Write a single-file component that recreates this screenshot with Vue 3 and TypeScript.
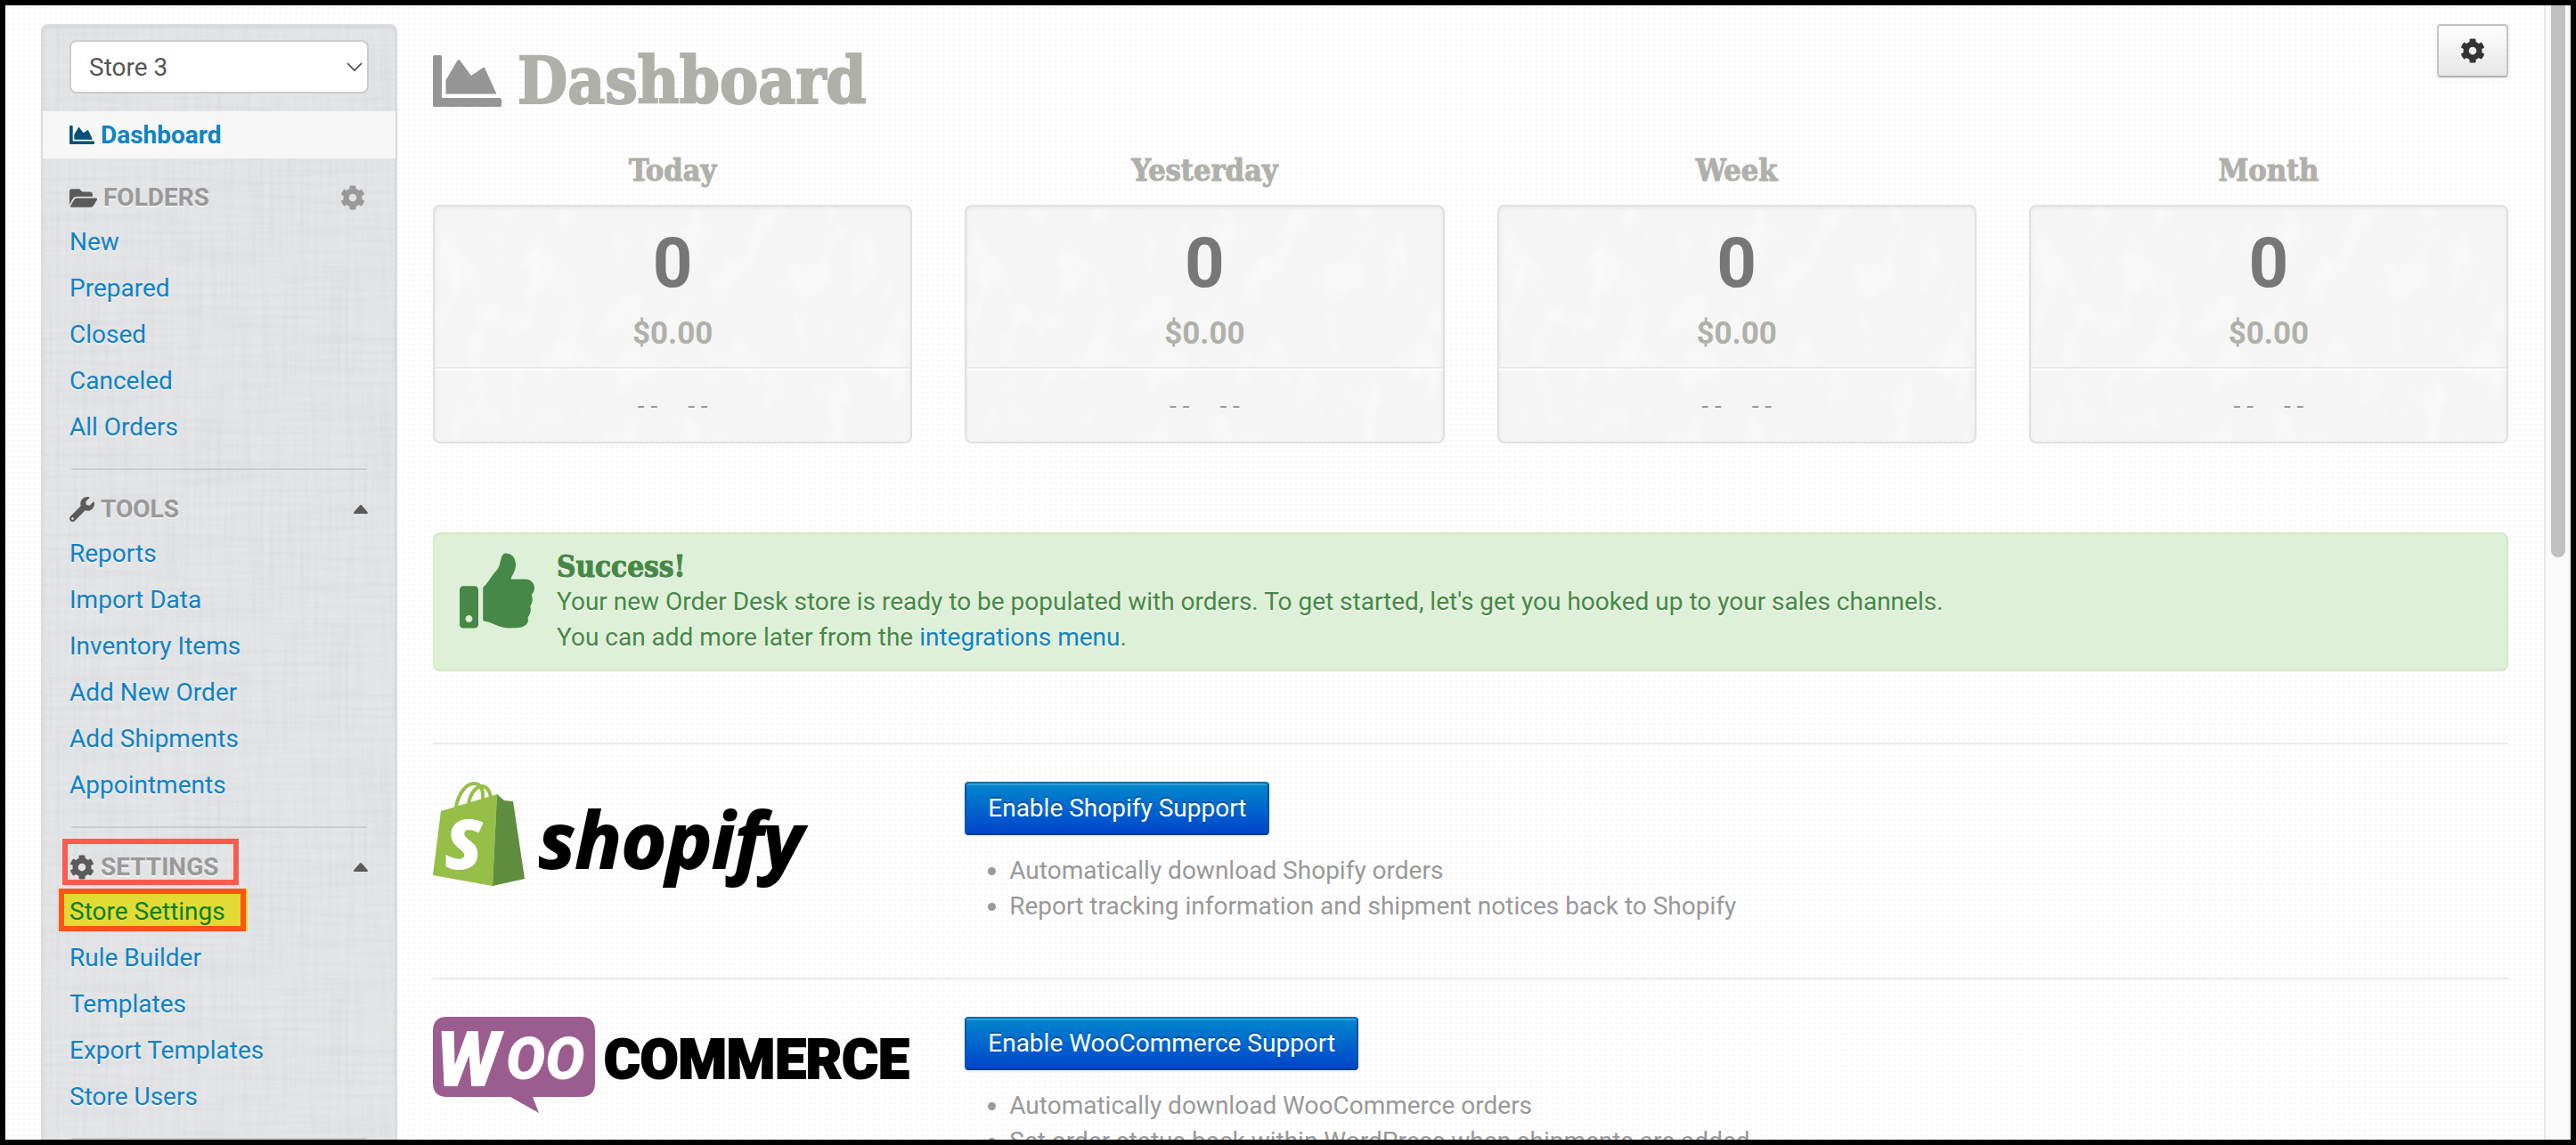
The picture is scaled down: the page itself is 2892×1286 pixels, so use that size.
<script setup lang="ts">
import { ref } from 'vue'

interface NavSection {
  title: string
  icon: 'folder' | 'wrench' | 'cog'
  control: 'cog' | 'caret'
  marked?: boolean
  items: string[]
}

interface Period {
  label: string
  orders: number
  total: string
}

interface Channel {
  id: 'shopify' | 'woo'
  button: string
  features: string[]
}

const store = ref('Store 3')

const icons = {
  folder: {
    box: '0 64 576 384',
    path: 'M572.694 292.093L500.27 416.248A63.997 63.997 0 0 1 444.989 448H45.025c-18.523 0-30.064-20.093-20.731-36.093l72.424-124.155A64 64 0 0 1 152 256h399.964c18.523 0 30.064 20.093 20.73 36.093zM152 224h328v-48c0-26.51-21.49-48-48-48H272l-64-64H48C21.49 64 0 85.49 0 112v278.046l69.077-118.418C86.214 242.25 117.989 224 152 224z',
  },
  wrench: {
    box: '0 0 512 512',
    path: 'M507.73 109.1c-2.24-9.03-13.54-12.09-20.12-5.51l-74.36 74.36-67.88-11.31-11.31-67.88 74.36-74.36c6.62-6.62 3.43-17.9-5.66-20.16-47.38-11.74-99.55.91-136.58 37.93-39.64 39.64-50.55 97.1-34.05 147.2L18.74 402.76c-24.99 24.99-24.99 65.51 0 90.5 24.99 24.99 65.51 24.99 90.5 0l213.21-213.21c50.12 16.71 107.47 5.68 147.37-34.22 37.07-37.07 49.7-89.32 37.91-136.73zM64 472c-13.25 0-24-10.75-24-24 0-13.26 10.75-24 24-24s24 10.74 24 24c0 13.25-10.75 24-24 24z',
  },
  cog: {
    box: '0 0 512 512',
    path: 'M487.4 315.7l-42.6-24.6c4.3-23.2 4.3-47 0-70.2l42.6-24.6c4.9-2.8 7.1-8.6 5.5-14-11.1-35.6-30-67.8-54.7-94.6-3.8-4.1-10-5.1-14.8-2.3L380.8 110c-17.9-15.4-38.5-27.3-60.8-35.1V25.8c0-5.6-3.9-10.5-9.4-11.7-36.7-8.2-74.3-7.8-109.2 0-5.5 1.2-9.4 6.1-9.4 11.7V75c-22.2 7.9-42.8 19.8-60.8 35.1L88.7 85.5c-4.9-2.8-11-1.9-14.8 2.3-24.7 26.7-43.6 58.9-54.7 94.6-1.7 5.4.6 11.2 5.5 14L67.3 221c-4.3 23.2-4.3 47 0 70.2l-42.6 24.6c-4.9 2.8-7.1 8.6-5.5 14 11.1 35.6 30 67.8 54.7 94.6 3.8 4.1 10 5.1 14.8 2.3l42.6-24.6c17.9 15.4 38.5 27.3 60.8 35.1v49.2c0 5.6 3.9 10.5 9.4 11.7 36.7 8.2 74.3 7.8 109.2 0 5.5-1.2 9.4-6.1 9.4-11.7v-49.2c22.2-7.9 42.8-19.8 60.8-35.1l42.6 24.6c4.9 2.8 11 1.9 14.8-2.3 24.7-26.7 43.6-58.9 54.7-94.6 1.5-5.5-.7-11.3-5.6-14.1zM256 336c-44.1 0-80-35.9-80-80s35.9-80 80-80 80 35.9 80 80-35.9 80-80 80z',
  },
}

const chartPath =
  'M2 0H8Q10 0 10 2V48H75Q77 48 77 50V56Q77 58 75 58H2Q0 58 0 56V2Q0 0 2 0ZM14.5 28L27.5 6Q29 4 30.5 6L43 23L55.5 14.5Q57.500 13 58.500 15L71.500 43.500H14.500Z'

const sections: NavSection[] = [
  {
    title: 'FOLDERS',
    icon: 'folder',
    control: 'cog',
    items: ['New', 'Prepared', 'Closed', 'Canceled', 'All Orders'],
  },
  {
    title: 'TOOLS',
    icon: 'wrench',
    control: 'caret',
    items: ['Reports', 'Import Data', 'Inventory Items', 'Add New Order', 'Add Shipments', 'Appointments'],
  },
  {
    title: 'SETTINGS',
    icon: 'cog',
    control: 'caret',
    marked: true,
    items: ['Store Settings', 'Rule Builder', 'Templates', 'Export Templates', 'Store Users'],
  },
]

const periods: Period[] = [
  { label: 'Today', orders: 0, total: '$0.00' },
  { label: 'Yesterday', orders: 0, total: '$0.00' },
  { label: 'Week', orders: 0, total: '$0.00' },
  { label: 'Month', orders: 0, total: '$0.00' },
]

const channels: Channel[] = [
  {
    id: 'shopify',
    button: 'Enable Shopify Support',
    features: [
      'Automatically download Shopify orders',
      'Report tracking information and shipment notices back to Shopify',
    ],
  },
  {
    id: 'woo',
    button: 'Enable WooCommerce Support',
    features: [
      'Automatically download WooCommerce orders',
      'Set order status back within WordPress when shipments are added',
    ],
  },
]
</script>

<template>
  <div class="frame">
    <div class="page">
      <aside class="sidebar">
        <div class="store-picker">
          <select v-model="store" aria-label="Store">
            <option>Store 3</option>
          </select>
          <svg class="chevron" viewBox="0 0 18 11" aria-hidden="true">
            <path d="M1 1L9 9L17 1" fill="none" stroke="#444" stroke-width="1.6" />
          </svg>
        </div>

        <a class="active-link" href="#dashboard">
          <svg class="chart-small" viewBox="0 0 77 58" aria-hidden="true"><path :d="chartPath" /></svg>
          Dashboard
        </a>

        <nav v-for="section in sections" :key="section.title" class="section" :aria-label="section.title">
          <h3 class="section-head">
            <span class="section-title" :class="{ marked: section.marked }">
              <svg :class="section.icon" :viewBox="icons[section.icon].box" aria-hidden="true">
                <path :d="icons[section.icon].path" />
              </svg>
              {{ section.title }}
            </span>
            <button v-if="section.control === 'cog'" class="head-button cog-button" aria-label="Folder options">
              <svg class="cog" :viewBox="icons.cog.box" aria-hidden="true"><path :d="icons.cog.path" /></svg>
            </button>
            <button v-else class="head-button" :aria-label="`Collapse ${section.title}`">
              <svg class="caret" viewBox="0 0 16 10" aria-hidden="true">
                <path d="M7 .6Q8 -.4 9 .6L15.500 8Q16.500 10 15 10H1Q-.5 10 .5 8Z" />
              </svg>
            </button>
          </h3>
          <ul>
            <li v-for="item in section.items" :key="item">
              <a href="#" :class="{ highlighted: item === 'Store Settings' }"><span>{{ item }}</span></a>
            </li>
          </ul>
        </nav>
      </aside>

      <main class="content">
        <header class="page-head">
          <h1>
            <svg class="chart-large" viewBox="0 0 77 58" aria-hidden="true"><path :d="chartPath" /></svg>
            Dashboard
          </h1>
          <button class="options" aria-label="Dashboard options">
            <svg class="cog" :viewBox="icons.cog.box" aria-hidden="true"><path :d="icons.cog.path" /></svg>
          </button>
        </header>

        <div class="periods">
          <section v-for="period in periods" :key="period.label">
            <h2>{{ period.label }}</h2>
            <div class="card">
              <div class="card-main">
                <strong class="count">{{ period.orders }}</strong>
                <span class="total">{{ period.total }}</span>
              </div>
              <div class="card-foot"><span>- -</span><span>- -</span></div>
            </div>
          </section>
        </div>

        <section class="alert">
          <svg class="thumb" viewBox="0 0 512 512" aria-hidden="true">
            <path
              d="M104 224H24c-13.255 0-24 10.745-24 24v240c0 13.255 10.745 24 24 24h80c13.255 0 24-10.745 24-24V248c0-13.255-10.745-24-24-24zM64 472c-13.255 0-24-10.745-24-24s10.745-24 24-24 24 10.745 24 24-10.745 24-24 24zM384 81.452c0 42.416-25.97 66.208-33.277 94.548h101.723c33.397 0 59.397 27.746 59.553 58.098.084 17.938-7.546 37.249-19.439 49.197l-.11.11c9.836 23.337 8.237 56.037-9.308 79.469 8.681 25.895-.069 57.704-16.382 74.757 4.298 17.598 2.244 32.575-6.148 44.632C440.202 511.587 389.616 512 346.839 512l-2.845-.001c-48.287-.017-87.806-17.598-119.56-31.725-15.957-7.099-36.821-15.887-52.651-16.178-6.54-.12-11.783-5.457-11.783-11.998v-213.77c0-3.2 1.282-6.271 3.558-8.521 39.614-39.144 56.648-80.587 89.117-113.111 14.804-14.832 20.188-37.236 25.393-58.902C282.515 39.293 291.817 0 312 0c24 0 72 8 72 81.452z"
            />
          </svg>
          <div>
            <h4>Success!</h4>
            <p>
              Your new Order Desk store is ready to be populated with orders. To get started, let's get you hooked up to
              your sales channels.<br />
              You can add more later from the <a href="#integrations">integrations menu</a>.
            </p>
          </div>
        </section>

        <section v-for="channel in channels" :key="channel.id" class="channel">
          <svg v-if="channel.id === 'shopify'" class="shopify" viewBox="0 0 420 120" role="img" aria-label="shopify">
            <g fill="none" stroke="#95bf47" stroke-width="4">
              <path d="M26 28C29 12 38 2 46 2C54 2 57 10 56 20" />
              <path d="M40 25C42 12 49 5 56 5C61 6 64 11 65 17" />
            </g>
            <path d="M9 33L72 14L67 117L0 105Z" fill="#95bf47" />
            <path d="M72 14L80 21L90 22L103 109L67 117Z" fill="#5e8e3e" />
            <text class="bag-letter" x="13" y="98">S</text>
            <text class="shopify-name" x="119" y="97">shopify</text>
          </svg>
          <svg v-else class="woo" viewBox="0 0 538 108" role="img" aria-label="WooCommerce">
            <path
              d="M16 0H166Q182 0 182 16V74Q182 90 166 90H112L119 108L87 90H16Q0 90 0 74V16Q0 0 16 0Z"
              fill="#9b5c8f"
            />
            <text class="woo-w" x="3" y="78">W</text>
            <text class="woo-o" x="82" y="70">OO</text>
            <text class="commerce" x="192" y="69">COMMERCE</text>
          </svg>
          <div class="channel-info">
            <button class="primary">{{ channel.button }}</button>
            <ul>
              <li v-for="feature in channel.features" :key="feature">{{ feature }}</li>
            </ul>
          </div>
        </section>
      </main>

      <div class="scroll-track" aria-hidden="true"><div class="scroll-thumb"></div></div>
    </div>
  </div>
</template>

<style>
body {
  margin: 0;
}
</style>

<style scoped>
*,
*::before,
*::after {
  box-sizing: border-box;
}

.frame {
  height: 100vh;
  overflow: hidden;
  border: 6px solid #000;
  color: #999;
  font: 28px/40px Roboto, 'Liberation Sans', sans-serif;
}

.page {
  display: flex;
  height: 100%;
  overflow: hidden;
  background: radial-gradient(circle, #f8f8f8 1px, transparent 2px) 0 0 / 6px 6px #fefefe;
}

h1,
h2,
h3,
h4,
p,
ul {
  margin: 0;
  padding: 0;
}

a {
  color: #0f83c4;
  text-decoration: none;
}

svg {
  flex: none;
  fill: currentColor;
}

button {
  font: inherit;
  cursor: pointer;
}

.sidebar {
  flex: none;
  align-self: flex-start;
  width: 400px;
  margin: 21px 40px 0;
  padding: 16px 0 40px;
  border: 2px solid #dadbdc;
  border-radius: 8px;
  background:
    url("data:image/svg+xml,%3Csvg xmlns='http://www.w3.org/2000/svg' width='400' height='400'%3E%3Cfilter id='h' x='0' y='0' width='100%25' height='100%25'%3E%3CfeTurbulence type='fractalNoise' baseFrequency='.008 .2' numOctaves='3' stitchTiles='stitch'/%3E%3CfeColorMatrix values='0 0 0 0 .4 0 0 0 0 .4 0 0 0 0 .42 .2 0 0 0 -.08'/%3E%3C/filter%3E%3Cfilter id='v' x='0' y='0' width='100%25' height='100%25'%3E%3CfeTurbulence type='fractalNoise' baseFrequency='.2 .008' numOctaves='3' seed='4' stitchTiles='stitch'/%3E%3CfeColorMatrix values='0 0 0 0 .4 0 0 0 0 .4 0 0 0 0 .42 .2 0 0 0 -.08'/%3E%3C/filter%3E%3Crect width='400' height='400' filter='url(%23h)'/%3E%3Crect width='400' height='400' filter='url(%23v)'/%3E%3C/svg%3E"),
    #e4e5e7;
  box-shadow: inset 0 2px 4px rgba(0, 0, 0, 0.06);
}

.store-picker {
  position: relative;
  margin: 0 30px 20px;
}

.store-picker select {
  display: block;
  width: 100%;
  height: 60px;
  padding: 2px 20px 0;
  border: 2px solid #ccc;
  border-radius: 8px;
  appearance: none;
  background: #fff;
  color: #555;
  font: inherit;
}

.chevron {
  position: absolute;
  top: 25px;
  right: 7px;
  width: 18px;
  height: 11px;
  pointer-events: none;
}

.active-link {
  display: flex;
  align-items: center;
  gap: 7px;
  height: 53px;
  margin-bottom: 21px;
  padding: 0 30px;
  background: #f7f7f7;
  font-weight: 700;
}

.chart-small {
  width: 28px;
  height: 21px;
  color: #04507a;
}

.section {
  margin: 0 30px;
}

.section::after {
  display: block;
  height: 2px;
  margin: 21px 2px;
  background: #cacbcc;
  content: '';
}

.section-head {
  display: flex;
  align-items: center;
  justify-content: space-between;
  height: 46px;
  font-size: 28px;
  text-shadow: 0 2px 0 rgba(255, 255, 255, 0.5);
}

.section-title {
  position: relative;
  display: flex;
  align-items: center;
  gap: 7px;
}

.section-title svg {
  color: #5b5b5b;
}

.folder {
  width: 31px;
  height: 21px;
}

.wrench,
.cog {
  width: 28px;
  height: 28px;
}

.marked::after {
  position: absolute;
  inset: -12px -23px 0 -8px;
  border: 6px solid #ff5a4d;
  content: '';
}

.head-button {
  display: flex;
  padding: 0 1px 0 0;
  border: 0;
  background: none;
  color: #5b5b5b;
}

.cog-button {
  padding-right: 4px;
  color: #999;
}

.caret {
  width: 16px;
  height: 10px;
}

.section ul {
  list-style: none;
}

.section li a {
  display: flex;
  align-items: center;
  height: 52px;
  padding-top: 2px;
  text-shadow: 0 2px 0 rgba(255, 255, 255, 0.5);
}

.highlighted {
  position: relative;
}

.section li .highlighted {
  color: #0b7f1e;
  text-shadow: none;
}

.highlighted span {
  position: relative;
}

.highlighted::before {
  position: absolute;
  top: 1px;
  left: -12px;
  width: 210px;
  height: 48px;
  border: 6px solid #ff5515;
  background: #e2db35;
  box-shadow: 2px 0 0 #ecd53a;
  content: '';
}

.content {
  flex: 1;
  min-width: 0;
  padding: 21px 40px 0 0;
}

.page-head {
  display: flex;
  align-items: flex-start;
  justify-content: space-between;
  margin-bottom: 40px;
}

h1,
h2,
h4 {
  font-family: 'DejaVu Serif Condensed', 'DejaVu Serif', serif;
  font-weight: 700;
  -webkit-text-stroke: 1px currentColor;
}

h1 {
  display: flex;
  align-items: center;
  gap: 18px;
  margin-top: 24px;
  color: #b0b0ab;
  font-size: 72px;
  line-height: 80px;
  -webkit-text-stroke-width: 2px;
}

.chart-large {
  width: 77px;
  height: 58px;
  color: #959595;
}

.options {
  display: flex;
  align-items: center;
  justify-content: center;
  width: 80px;
  height: 60px;
  border: 2px solid #c5c5c5;
  border-bottom-color: #b3b3b3;
  border-radius: 4px;
  background: linear-gradient(#fff, #e6e6e6);
  color: #333;
  box-shadow: 0 2px 4px rgba(0, 0, 0, 0.05);
}

.periods {
  display: grid;
  grid-template-columns: repeat(4, 1fr);
  gap: 59px;
  text-align: center;
}

h2 {
  margin-bottom: 19px;
  color: #b0b0ab;
  font-size: 34px;
  line-height: 40px;
}

.card {
  border: 2px solid #e0e0e0;
  border-radius: 8px;
  background:
    url("data:image/svg+xml,%3Csvg xmlns='http://www.w3.org/2000/svg' width='540' height='270'%3E%3Cfilter id='n' x='0' y='0' width='100%25' height='100%25'%3E%3CfeTurbulence type='fractalNoise' baseFrequency='.03 .02' numOctaves='5' seed='3'/%3E%3CfeColorMatrix values='0 0 0 0 1 0 0 0 0 1 0 0 0 0 1 3 0 0 0 -1.5'/%3E%3C/filter%3E%3Crect width='540' height='270' filter='url(%23n)' opacity='.4'/%3E%3C/svg%3E"),
    #f5f5f5;
  box-shadow: inset 0 2px 4px rgba(0, 0, 0, 0.05);
}

.card-main {
  display: flex;
  flex-direction: column;
  gap: 19px;
  padding: 24px 0 17px;
  border-bottom: 2px solid #e9e9e9;
}

.count {
  color: #777;
  font-size: 78px;
  line-height: 80px;
}

.total {
  color: #b0b0ab;
  font-size: 35px;
  font-weight: 700;
}

.card-foot {
  display: flex;
  justify-content: center;
  gap: 34px;
  padding: 20px 0;
  border-top: 2px solid #fff;
}

.alert {
  display: flex;
  gap: 25px;
  margin: 100px 0 80px;
  padding: 18px 28px 16px;
  border: 2px solid #d6e9c6;
  border-radius: 8px;
  background: #dff0d8;
  color: #468847;
  text-shadow: 0 2px 0 rgba(255, 255, 255, 0.5);
}

.thumb {
  width: 84px;
  height: 85px;
  margin-top: 3px;
}

h4 {
  font-size: 33px;
  line-height: 38px;
}

.channel {
  display: grid;
  grid-template-columns: repeat(4, 1fr);
  column-gap: 59px;
  padding: 42px 0 60px;
  border-top: 2px solid #ececec;
}

.channel-info {
  grid-column: span 3;
}

.channel-info ul {
  margin-top: 20px;
  padding-left: 50px;
}

.primary {
  display: block;
  height: 60px;
  padding: 0 24px;
  border: 2px solid;
  border-color: #0b6fae #0a55a5 #053f8c;
  border-radius: 4px;
  background: linear-gradient(#0088cc, #0044cc);
  color: #fff;
  text-shadow: 0 -2px 0 rgba(0, 0, 0, 0.25);
  box-shadow:
    inset 0 2px 0 rgba(255, 255, 255, 0.2),
    0 2px 4px rgba(0, 0, 0, 0.05);
}

.shopify {
  width: 420px;
  height: 120px;
  overflow: visible;
}

.woo {
  width: 538px;
  height: 108px;
  overflow: visible;
}

.bag-letter,
.shopify-name {
  font-family: 'Open Sans', sans-serif;
  font-style: italic;
  font-weight: 800;
}

.bag-letter {
  fill: #fff;
  font-size: 78px;
}

.shopify-name {
  fill: #000;
  stroke: #000;
  stroke-width: 2px;
  font-size: 86px;
  font-weight: 700;
}

.woo-w,
.woo-o,
.commerce {
  font-family: Roboto, sans-serif;
  font-weight: 900;
}

.woo-w,
.woo-o {
  fill: #fff;
  font-style: italic;
}

.woo-w {
  font-size: 86px;
}

.woo-o {
  font-size: 66px;
}

.commerce {
  fill: #000;
  stroke: #000;
  stroke-width: 2px;
  font-size: 62px;
}

.scroll-track {
  flex: none;
  width: 30px;
  padding: 0 6px;
  border-right: 2px solid #eee;
  border-left: 2px solid #e8e8e8;
  background: #fafafa;
}

.scroll-thumb {
  width: 16px;
  height: 620px;
  border-radius: 0 0 8px 8px;
  background: #c1c1c1;
}
</style>
